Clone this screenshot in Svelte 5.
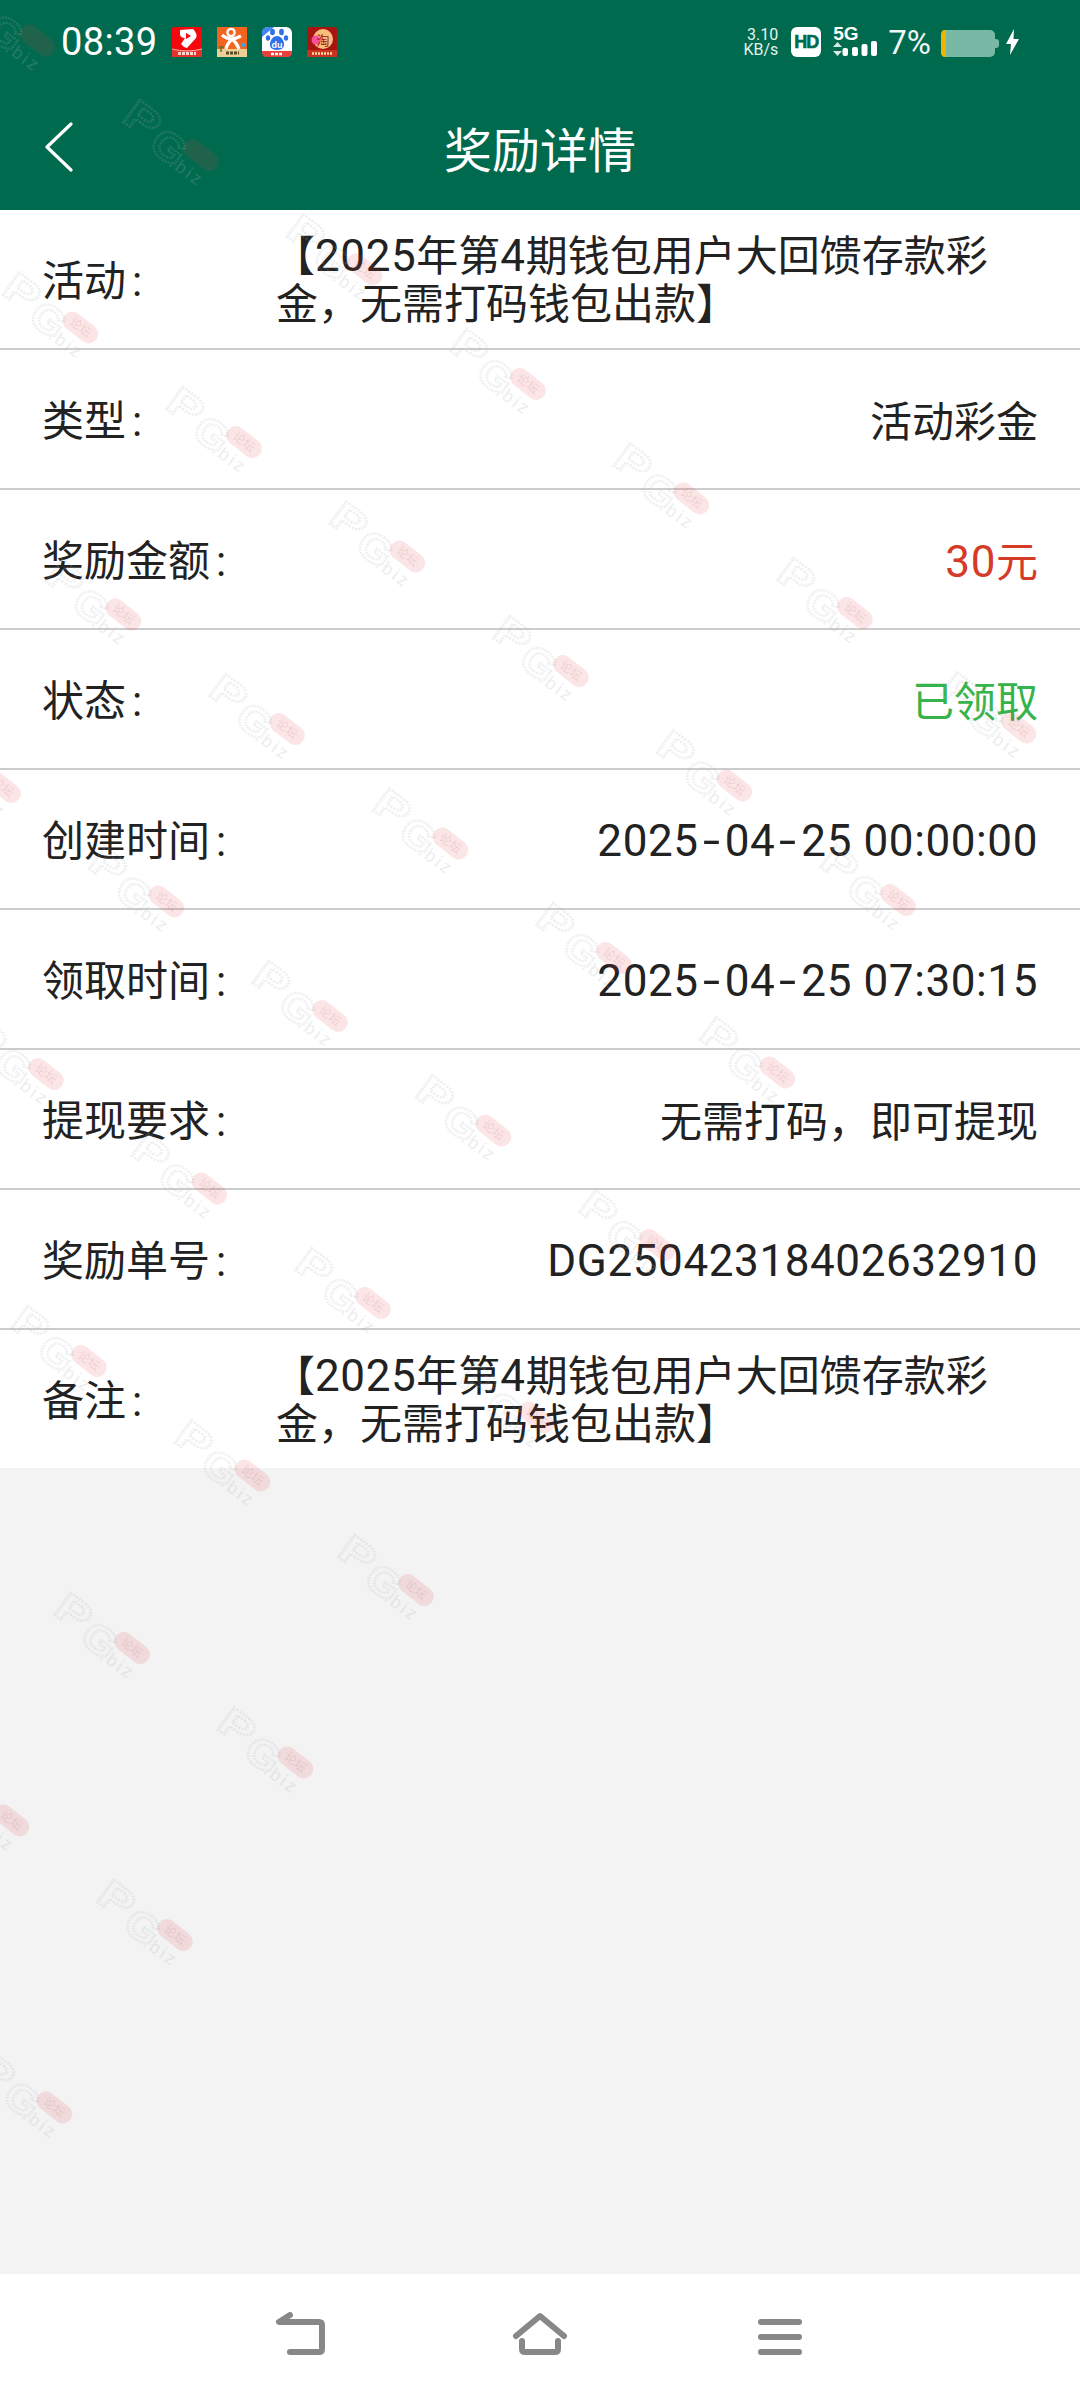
<script>
  const activity = '【2025年第4期钱包用户大回馈存款彩金，无需打码钱包出款】';

  const rows = [
    { label: '活动', value: activity, wrap: true },
    { label: '类型', value: '活动彩金' },
    { label: '奖励金额', value: '30元', tone: 'red' },
    { label: '状态', value: '已领取', tone: 'green' },
    { label: '创建时间', value: '2025-04-25 00:00:00' },
    { label: '领取时间', value: '2025-04-25 07:30:15' },
    { label: '提现要求', value: '无需打码，即可提现' },
    { label: '奖励单号', value: 'DG25042318402632910' },
    { label: '备注', value: activity, wrap: true }
  ];

  // latin runs are set a little larger than the CJK around them
  const latin = /^[\x20-\x7e]+$/;
  const runs = (text) => text.split(/([\x20-\x7e]+)/).filter(Boolean);

  // repeated forum stamp: two lattice steps, cut off along a diagonal
  const marks = [];
  for (let j = -5; j <= 3; j++) {
    for (let i = -2; i + j <= 2; i++) {
      if (j === -5 && i < 1) continue;
      const x = 10 + i * 163.5 + j * 43;
      const y = 1310 + i * 114.5 + j * 287;
      if (x > -96 && x < 1080) marks.push({ x, y });
    }
  }
</script>

<div class="page">
  <header>
    <div class="status">
      <span class="time">08:39</span>
      <div class="apps">
        <svg viewBox="0 0 30 30" width="30" height="30">
          <rect width="30" height="30" rx="2" fill="#f4080e" />
          <rect y="23" width="30" height="7" fill="#e5332c" />
          <path d="M0 22q15 4 30 0" fill="none" stroke="#ffb3a8" stroke-width="1" />
          <path d="M8 3l13-1q5 5 3 9l-9 10q-4-1-6-4l4-6q-4 0-5-3z" fill="#fff" />
          <path d="M14 6l5 3-5 3z" fill="#f4080e" />
          <path d="M6 26.500h18" stroke="#ffd7cf" stroke-width="3" stroke-dasharray="3 1" />
        </svg>
        <svg viewBox="0 0 30 30" width="30" height="30">
          <rect width="30" height="30" fill="#f4641e" />
          <rect y="22" width="30" height="8" fill="#eccf95" />
          <circle cx="14" cy="5.500" r="3.600" fill="none" stroke="#fff" stroke-width="2.400" />
          <path d="M5 8q8 7 19 1M15 12q-5 5-6 10M15 12q5 4 7 10" fill="none" stroke="#fff" stroke-width="3.200" />
          <path d="M9 26h13" stroke="#5c4a24" stroke-width="3" stroke-dasharray="3 1" />
          <path d="M2 20h5M4 20v5" stroke="#4f7a2c" stroke-width="1.500" fill="none" />
          <circle cx="26" cy="18" r="2.200" fill="#4d9fdc" />
        </svg>
        <svg viewBox="0 0 30 30" width="30" height="30">
          <rect width="30" height="30" rx="6" fill="#fff" />
          <path d="M6 0h6L0 10V6q0-6 6-6z" fill="#3f86f0" />
          <path d="M0 24h30v1q0 5-5 5H5q-5 0-5-5z" fill="#e8413c" />
          <g fill="#2f6fe8">
            <ellipse cx="10.500" cy="5" rx="2.400" ry="3.200" />
            <ellipse cx="19.500" cy="5" rx="2.400" ry="3.200" />
            <ellipse cx="6" cy="11" rx="2.200" ry="2.800" />
            <ellipse cx="24" cy="11" rx="2.200" ry="2.800" />
            <path d="M15 9q5 0 7 7 1 7-7 7t-7-7q2-7 7-7z" />
          </g>
          <text x="15" y="20.500" class="du">du</text>
          <path d="M9 27h12" stroke="#fff" stroke-width="2.500" stroke-dasharray="3 1" />
        </svg>
        <svg viewBox="0 0 30 30" width="30" height="30">
          <rect width="30" height="30" rx="3" fill="#a8140f" />
          <circle cx="16" cy="12" r="10" fill="#f9bd7c" />
          <circle cx="9" cy="13" r="4.500" fill="#f2529a" />
          <text x="16" y="17.500" class="tao">淘</text>
          <rect y="23" width="30" height="7" fill="#c9321f" />
          <path d="M5 26.500h20" stroke="#ffd9a0" stroke-width="2.500" stroke-dasharray="2 1" />
        </svg>
      </div>
      <div class="spacer"></div>
      <div class="speed"><span>3.10</span><span>KB/s</span></div>
      <span class="hd">HD</span>
      <div class="net">
        <span class="five">5G</span>
        <svg viewBox="0 0 46 16" width="46" height="16">
          <path d="M4.500 1l4.500 5H0zM4.500 15L9 10H0z" fill="#fff" opacity=".85" />
          <rect x="9.500" y="7" width="5.500" height="8" rx="2" fill="#fff" />
          <rect x="19" y="6" width="6" height="9" rx="2" fill="#fff" />
          <rect x="28.500" y="3" width="6" height="12" rx="2" fill="#fff" />
          <rect x="38" y="0" width="6" height="15" rx="2" fill="#fff" />
        </svg>
      </div>
      <span class="pct">7%</span>
      <svg class="battery" viewBox="0 0 58 27" width="58" height="27">
        <rect width="54" height="27" rx="5" fill="#7ab8a6" />
        <path d="M5 0h-1q-4 0-4 5v17q0 5 4 5h1z" fill="#f0b400" />
        <path d="M54 9h1q3 0 3 3v3q0 3-3 3h-1z" fill="#7ab8a6" />
      </svg>
      <svg class="bolt" viewBox="0 0 13 26" width="13" height="26">
        <path d="M8 0L0 15h5L4 26l9-16H7.500z" fill="#fff" />
      </svg>
    </div>
    <div class="bar">
      <svg class="back" viewBox="0 0 30 50" width="30" height="50">
        <path d="M27 2L3 25l24 23" fill="none" stroke="#fff" stroke-width="3.200" stroke-linecap="round" stroke-linejoin="round" />
      </svg>
      <h1>奖励详情</h1>
    </div>
  </header>

  <main>
    <ul>
      {#each rows as row}
        <li>
          <span class="label">{row.label}<i>:</i></span>
          <span class="value {row.tone ?? ''}" class:wrap={row.wrap} class:num={latin.test(row.value)}>{#each runs(row.value) as run}{#if latin.test(run)}<span class="lat">{#each run.split('-') as part, k}{#if k}<b>-</b>{/if}{part}{/each}</span>{:else}{run}{/if}{/each}</span>
        </li>
      {/each}
    </ul>
  </main>

  <nav>
    <svg viewBox="0 0 50 48" width="50" height="48">
      <path d="M15 6L4 13h40q3 0 3 3v24q0 3-3 3H15" fill="none" stroke="#888" stroke-width="6" stroke-linecap="round" stroke-linejoin="round" />
    </svg>
    <svg viewBox="0 0 50 48" width="50" height="48">
      <path d="M1 27L25 7l24 20M7 32v8q0 3 3 3h30q3 0 3-3v-8" fill="none" stroke="#888" stroke-width="6" stroke-linecap="round" stroke-linejoin="round" />
    </svg>
    <svg viewBox="0 0 50 48" width="50" height="48">
      <path d="M6 13h38M6 28h38M6 43h38" fill="none" stroke="#888" stroke-width="6" stroke-linecap="round" />
    </svg>
  </nav>

  <svg class="stamps" viewBox="0 0 1080 2400" width="1080" height="2400">
    {#each marks as m}
      <g transform="translate({m.x} {m.y})">
        <text class="pg" transform="translate(21 15) rotate(36) scale(1.3 1)" y="14">P</text>
        <text class="pg" transform="translate(47 43) rotate(36) scale(1.1 1)" y="14">G</text>
        <g transform="translate(79 51) rotate(38)">
          <rect x="-20" y="-9.500" width="40" height="19" rx="9.500" class="pill" />
          <text class="forum" y="4">论坛</text>
        </g>
        <text class="biz" transform="translate(64 68) rotate(36)" y="5">.biz</text>
      </g>
    {/each}
  </svg>
</div>

<style>
  :global(body) {
    margin: 0;
    background: #f3f3f3;
  }
  .page {
    position: relative;
    width: 1080px;
    height: 2400px;
    overflow: hidden;
    display: flex;
    flex-direction: column;
    font-family: Roboto, "Noto Sans CJK SC", sans-serif;
    color: #222;
  }
  header {
    background: #006a4e;
    color: #fff;
    height: 210px;
    flex: none;
  }
  .status {
    height: 84px;
    display: flex;
    align-items: center;
    padding: 0 61px;
  }
  .time {
    font-size: 38px;
    width: 111px;
    letter-spacing: 0.4px;
  }
  .apps {
    display: flex;
    gap: 15px;
  }
  .apps svg {
    display: block;
  }
  .du {
    font: bold 9px "Liberation Sans", sans-serif;
    fill: #fff;
    text-anchor: middle;
  }
  .tao {
    font: 13px "Noto Sans CJK SC", sans-serif;
    fill: #a8140f;
    text-anchor: middle;
  }
  .spacer {
    flex: 1;
  }
  .speed {
    display: flex;
    flex-direction: column;
    align-items: flex-end;
    font-size: 16px;
    line-height: 15px;
    color: #e4f2ee;
    margin-right: 13px;
  }
  .hd {
    width: 30px;
    height: 30px;
    border-radius: 6px;
    background: #fff;
    color: #006a4e;
    font: bold 18px/30px "Liberation Sans", sans-serif;
    letter-spacing: -1px;
    -webkit-text-stroke: 0.6px #006a4e;
    text-align: center;
    margin-right: 12px;
  }
  .net {
    display: flex;
    flex-direction: column;
    width: 46px;
    height: 30px;
  }
  .net svg {
    display: block;
  }
  .five {
    font: bold 19px/14px "Liberation Sans", sans-serif;
  }
  .pct {
    font-size: 33px;
    margin-left: 9px;
    color: #eef6f3;
  }
  .battery {
    margin-left: 10px;
    position: relative;
    top: 1px;
  }
  .bolt {
    margin-left: 7px;
  }
  .bar {
    position: relative;
    height: 126px;
    display: flex;
    align-items: center;
    justify-content: center;
  }
  .back {
    position: absolute;
    left: 44px;
    top: 38px;
  }
  h1 {
    margin: 0;
    font-size: 48px;
    font-weight: 400;
  }
  main {
    flex: 1;
  }
  ul {
    margin: 0;
    padding: 0;
    list-style: none;
    background: #fff;
  }
  li {
    height: 138px;
    display: flex;
    align-items: center;
    justify-content: space-between;
    padding: 0 42px;
    border-bottom: 2px solid #ccc;
    font-size: 42px;
  }
  li:last-child {
    border-bottom: 0;
  }
  .label {
    flex: none;
    white-space: nowrap;
    position: relative;
    top: -2px;
  }
  .label i {
    font-style: normal;
    margin-left: 6px;
  }
  .value {
    white-space: nowrap;
    font-size: 42px;
    position: relative;
    top: -1px;
  }
  .value.num {
    top: 2px;
  }
  .lat {
    font-size: 44px;
    letter-spacing: 0.6px;
  }
  .value b {
    font-weight: 400;
    display: inline-block;
    width: 26px;
    text-align: center;
    transform: scaleX(1.4);
  }
  .value.wrap {
    width: 762px;
    white-space: normal;
    line-height: 48px;
    text-indent: -3px;
    top: 1px;
    overflow-wrap: anywhere;
  }
  .red {
    color: #d63b29;
  }
  .green {
    color: #36b34a;
  }
  nav {
    flex: none;
    height: 126px;
    box-sizing: border-box;
    padding-top: 35px;
    background: #fff;
    display: flex;
    justify-content: center;
    gap: 190px;
  }
  nav svg {
    display: block;
    overflow: visible;
  }
  .stamps {
    position: absolute;
    left: 0;
    top: 0;
    pointer-events: none;
  }
  .pg {
    font: bold 40px "Liberation Sans", sans-serif;
    text-anchor: middle;
    fill: none;
    stroke: #a9b4b8;
    stroke-width: 2.400;
    stroke-dasharray: 1.600 1.200;
    opacity: 0.2;
  }
  .pill {
    fill: #e5393c;
    opacity: 0.13;
  }
  .forum {
    font: 12px "Noto Sans CJK SC", sans-serif;
    text-anchor: middle;
    fill: #8a3a3a;
    opacity: 0.12;
  }
  .biz {
    font: 18px "Liberation Sans", sans-serif;
    letter-spacing: 2.500px;
    text-anchor: middle;
    fill: #a9b4b8;
    opacity: 0.22;
  }
</style>
